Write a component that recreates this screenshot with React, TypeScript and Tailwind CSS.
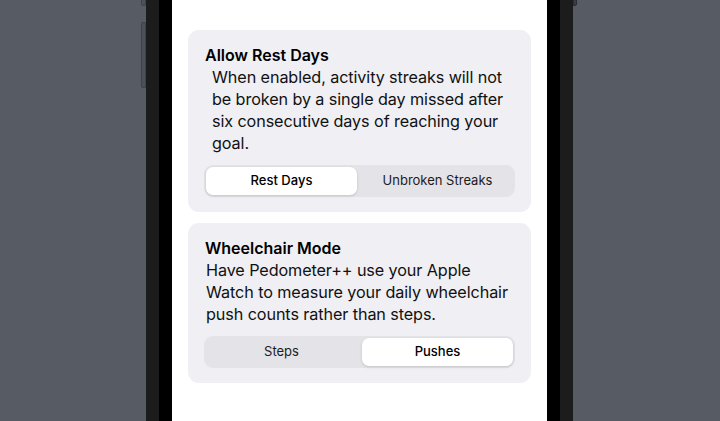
import React, { useState } from 'react';

type SegmentProps = {
  options: string[];
  value: number;
  onChange: (i: number) => void;
};

const Segmented: React.FC<SegmentProps> = ({ options, value, onChange }) => (
  <div className="grid grid-cols-2 gap-[5px] h-[32px] p-[2px] rounded-[9px] bg-[#e3e3e8]">
    {options.map((o, i) => (
      <button
        key={o}
        onClick={() => onChange(i)}
        className={
          i === value
            ? 'rounded-[7px] bg-white text-[13px] font-medium text-black shadow-[0_1px_3px_rgba(0,0,0,0.15)]'
            : 'rounded-[7px] text-[13px] font-normal text-[#1c1c1e]'
        }
      >
        {o}
      </button>
    ))}
  </div>
);

const SettingCard: React.FC<{
  title: string;
  body: string;
  indent: string;
  options: string[];
  initial: number;
}> = ({ title, body, indent, options, initial }) => {
  const [value, setValue] = useState(initial);
  return (
    <div className="rounded-[11px] bg-[#efeff4] pt-[14px] pb-[15px] pl-[17px] pr-[16px]">
      <h2 className="text-[16px] leading-[22px] font-semibold text-black">{title}</h2>
      <p className={`${indent} text-[16.2px] leading-[22px] text-[#111] tracking-[-0.1px]`}>{body}</p>
      <div className="mt-[11px] -ml-[1px]">
        <Segmented options={options} value={value} onChange={setValue} />
      </div>
    </div>
  );
};

const App: React.FC = () => {
  return (
    <div
      className="flex h-[421px] w-[720px] overflow-hidden bg-[#575c64]"
      style={{ fontFamily: 'Inter, "Noto Sans", sans-serif' }}
    >
      <div className="relative w-[146px] shrink-0">
        <div className="absolute right-0 top-[-4px] h-[10px] w-[5px] rounded-l-[2px] border border-[#3f4349] bg-[#4c5057]" />
        <div className="absolute right-0 top-[22px] h-[66px] w-[5px] rounded-l-[2px] border border-[#3f4349] bg-[#4c5057]" />
      </div>
      <div className="flex shrink-0">
        <div className="w-[13px] bg-[#1c1c1c]" />
        <div className="w-[13px] bg-black" />
        <div className="flex w-[375px] flex-col gap-[11px] bg-white px-[16px] pt-[30px]">
          <SettingCard
            title="Allow Rest Days"
            body="When enabled, activity streaks will not be broken by a single day missed after six consecutive days of reaching your goal."
            indent="pl-[7px]"
            options={['Rest Days', 'Unbroken Streaks']}
            initial={0}
          />
          <SettingCard
            title="Wheelchair Mode"
            body="Have Pedometer++ use your Apple Watch to measure your daily wheelchair push counts rather than steps."
            indent="pl-[1px]"
            options={['Steps', 'Pushes']}
            initial={1}
          />
        </div>
        <div className="w-[13px] bg-black" />
        <div className="w-[13px] bg-[#1c1c1c]" />
      </div>
      <div className="relative flex-1">
        <div className="absolute left-0 top-[-4px] h-[10px] w-[4px] rounded-r-[2px] border border-[#2a2c30] bg-[#3a3d42]" />
      </div>
    </div>
  );
};

export default App;
